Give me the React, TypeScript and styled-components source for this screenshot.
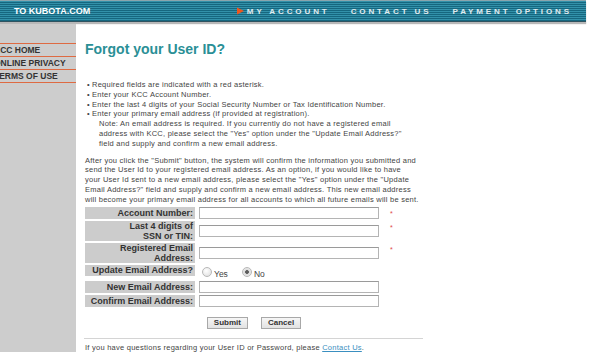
import styled, { createGlobalStyle } from "styled-components";

const GlobalStyle = createGlobalStyle`
  html, body {
    margin: 0;
    padding: 0;
    background: #fff;
  }
  body {
    font-family: "Liberation Sans", Arial, sans-serif;
    color: #444;
    overflow: hidden;
  }
`;

const Page = styled.div`
  width: 589px;
  height: 352px;
  display: flex;
  flex-direction: column;
  overflow: hidden;
`;

const TopBar = styled.div`
  display: flex;
  align-items: center;
  flex-shrink: 0;
  width: 586px;
  height: 22px;
  padding: 0 14px;
  box-sizing: border-box;
  border-top: 1px solid #8aa5ad;
  border-bottom: 1px solid #2f5360;
  box-shadow: 0 2px 1px #b8b8b8;
  background: repeating-linear-gradient(
    to bottom,
    #3291aa 0,
    #3291aa 1px,
    #16677f 1px,
    #16677f 2px
  );
`;

const HomeLink = styled.span`
  font-size: 9px;
  font-weight: bold;
  color: #fff;
`;

const Nav = styled.nav`
  display: flex;
  align-items: center;
  gap: 21px;
  margin-left: auto;
`;

const NavItem = styled.span`
  display: flex;
  align-items: center;
  font-size: 8px;
  font-weight: bold;
  letter-spacing: 2.9px;
  color: #e2ebee;
`;

const Arrow = styled.svg`
  width: 7px;
  height: 8px;
  margin-right: 3px;
`;

const Main = styled.div`
  display: flex;
  flex: 1;
  min-height: 0;
  margin-top: 2px;
`;

const Sidebar = styled.aside`
  width: 76px;
  flex-shrink: 0;
  padding-top: 19px;
  background: #cdcdcd;
  overflow: hidden;
`;

const SideLink = styled.div<{ $last?: boolean }>`
  height: 12px;
  margin-left: -6px;
  border-top: 1px solid #de6a42;
  border-bottom: ${(p) => (p.$last ? "1px solid #de6a42" : "none")};
  font-size: 8.5px;
  font-weight: bold;
  line-height: 13px;
  letter-spacing: 0;
  color: #333;
  white-space: nowrap;
`;

const Content = styled.main`
  width: 338px;
  padding: 17px 0 0 9px;
`;

const Title = styled.h1`
  margin: 0;
  font-size: 14px;
  line-height: 17px;
  font-weight: bold;
  color: #2a8f96;
`;

const Text = styled.div`
  font-size: 7.5px;
  line-height: 9.8px;
  letter-spacing: 0.25px;
  color: #444;
  white-space: nowrap;
`;

const List = styled(Text).attrs({ as: "ul" })`
  margin: 22px 0 0;
  padding: 0 0 0 2px;
  list-style: none;
`;

const Item = styled.li`
  display: flex;
`;

const Dot = styled.span`
  width: 5px;
  flex-shrink: 0;
`;

const Note = styled.div`
  padding-left: 7px;
`;

const Paragraph = styled(Text).attrs({ as: "p" })`
  margin: 7px 0 0;
`;

const Form = styled.div`
  display: grid;
  grid-template-columns: 110px auto;
  column-gap: 4px;
  row-gap: 2px;
  margin-top: 2px;
`;

const Label = styled.div<{ $h: number }>`
  display: flex;
  align-items: center;
  justify-content: flex-end;
  height: ${(p) => p.$h}px;
  padding-right: 2px;
  background: #cccccc;
  font-size: 9px;
  line-height: 10px;
  font-weight: bold;
  text-align: right;
  color: #333;
`;

const Field = styled.div`
  display: flex;
  align-items: center;
`;

const Input = styled.input`
  width: 180px;
  height: 12px;
  margin: 0;
  padding: 0 2px;
  box-sizing: border-box;
  border: 1px solid #b4b4b4;
  border-top-color: #9a9a9a;
  background: #fff;
  font-size: 8px;
`;

const Required = styled.span`
  align-self: flex-start;
  margin: 3px 0 0 11px;
  font-size: 7px;
  line-height: 7px;
  color: #e04848;
`;

const Radio = styled.input`
  appearance: none;
  width: 10px;
  height: 10px;
  margin: 0 2px 0 3px;
  border: 1px solid #b8b8b8;
  border-radius: 50%;
  background: radial-gradient(circle at 40% 35%, #fff 0, #e6e6e6 70%);
  box-sizing: border-box;
  &:checked {
    background: radial-gradient(circle, #555 0, #666 1.6px, #ddd 2.2px, #f4f4f4 100%);
  }
`;

const RadioText = styled.span`
  margin: 4px 11px 0 0;
  font-size: 8.5px;
  color: #444;
`;

const Buttons = styled.div`
  display: flex;
  justify-content: center;
  gap: 13px;
  margin-top: 10px;
`;

const Button = styled.button`
  height: 12px;
  padding: 0 6px;
  border: 1px solid #a8a8a8;
  background: linear-gradient(#f6f6f6, #e2e2e2);
  font-family: "Liberation Sans", Arial, sans-serif;
  font-size: 8px;
  font-weight: bold;
  line-height: 10px;
  color: #333;
`;

const Rule = styled.hr`
  margin: 9px 0 0 -1px;
  border: none;
  border-top: 1px solid #d4d4d4;
`;

const Footer = styled(Text)`
  margin-top: 4px;
`;

const Link = styled.a`
  color: #3a8fc0;
  text-decoration: underline;
`;

const rows = [
  { label: ["Account Number:"], h: 12, req: true },
  { label: ["Last 4 digits of", "SSN or TIN:"], h: 20, req: true },
  { label: ["Registered Email", "Address:"], h: 20, req: true },
  { label: ["Update Email Address?"], h: 11, radio: true },
  { label: ["New Email Address:"], h: 12 },
  { label: ["Confirm Email Address:"], h: 12 },
];

export default function App() {
  return (
    <Page>
      <GlobalStyle />
      <TopBar>
        <HomeLink>TO KUBOTA.COM</HomeLink>
        <Nav>
          <NavItem>
            <Arrow viewBox="0 0 7 8">
              <path d="M0 0.5 L7 4 L0 7.5 Z" fill="#f0561c" />
            </Arrow>
            MY ACCOUNT
          </NavItem>
          <NavItem>CONTACT US</NavItem>
          <NavItem>PAYMENT OPTIONS</NavItem>
        </Nav>
      </TopBar>
      <Main>
        <Sidebar>
          <SideLink>KCC HOME</SideLink>
          <SideLink>ONLINE PRIVACY</SideLink>
          <SideLink $last>TERMS OF USE</SideLink>
        </Sidebar>
        <Content>
          <Title>Forgot your User ID?</Title>
          <List>
            <Item>
              <Dot>•</Dot>Required fields are indicated with a red asterisk.
            </Item>
            <Item>
              <Dot>•</Dot>Enter your KCC Account Number.
            </Item>
            <Item>
              <Dot>•</Dot>Enter the last 4 digits of your Social Security Number or Tax Identification Number.
            </Item>
            <Item>
              <Dot>•</Dot>
              <div>
                Enter your primary email address (if provided at registration).
                <Note>
                  Note: An email address is required. If you currently do not have a registered email
                  <br />
                  address with KCC, please select the "Yes" option under the "Update Email Address?"
                  <br />
                  field and supply and confirm a new email address.
                </Note>
              </div>
            </Item>
          </List>
          <Paragraph>
            After you click the "Submit" button, the system will confirm the information you submitted and
            <br />
            send the User Id to your registered email address. As an option, if you would like to have
            <br />
            your User Id sent to a new email address, please select the "Yes" option under the "Update
            <br />
            Email Address?" field and supply and confirm a new email address. This new email address
            <br />
            will become your primary email address for all accounts to which all future emails will be sent.
          </Paragraph>
          <Form>
            {rows.map((r) => (
              <>
                <Label key={r.label[0]} $h={r.h}>
                  <span>
                    {r.label.map((l, i) => (
                      <div key={i}>{l}</div>
                    ))}
                  </span>
                </Label>
                <Field key={r.label[0] + "-f"}>
                  {r.radio ? (
                    <>
                      <Radio type="radio" name="update" />
                      <RadioText>Yes</RadioText>
                      <Radio type="radio" name="update" defaultChecked />
                      <RadioText>No</RadioText>
                    </>
                  ) : (
                    <>
                      <Input type="text" />
                      {r.req && <Required>*</Required>}
                    </>
                  )}
                </Field>
              </>
            ))}
          </Form>
          <Buttons>
            <Button>Submit</Button>
            <Button>Cancel</Button>
          </Buttons>
          <Rule />
          <Footer>
            If you have questions regarding your User ID or Password, please <Link href="#">Contact Us</Link>.
          </Footer>
        </Content>
      </Main>
    </Page>
  );
}
